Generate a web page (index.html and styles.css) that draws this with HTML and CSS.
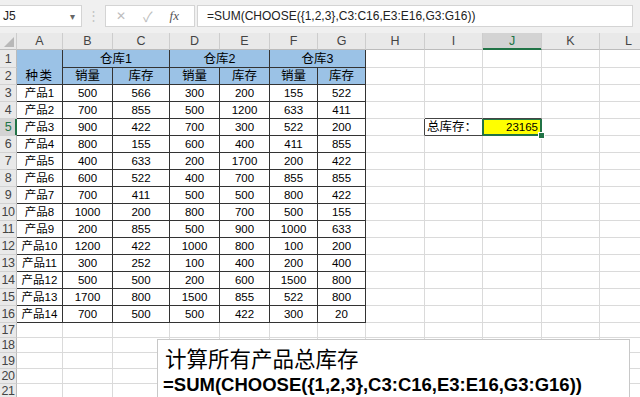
FILE: index.html
```html
<!DOCTYPE html>
<html lang="zh">
<head>
    <meta charset="UTF-8">
    <title>总库存</title>
    <link rel="stylesheet" href="styles.css">
</head>
<body>
<div class="toolbar">
    <div class="namebox"><span>J5</span><span class="arrow">&#9662;</span></div>
    <div class="sep">&#8942;</div>
    <div class="fxbox">
        <span class="cancel">&#10005;</span>
        <span class="enter">&#10003;</span>
        <span class="fx">fx</span>
    </div>
    <div class="formula">=SUM(CHOOSE({1,2,3},C3:C16,E3:E16,G3:G16))</div>
</div>

<div class="sheetwrap">
<table class="sheet">
    <colgroup>
        <col class="w-rh"><col class="w-a"><col class="w-b"><col class="w-c"><col class="w-d"><col class="w-e">
        <col class="w-f"><col class="w-g"><col class="w-h"><col class="w-i"><col class="w-j"><col class="w-k"><col class="w-l">
    </colgroup>
    <tr class="hdr">
        <td class="corner"><span class="tri"></span></td>
        <td class="ch">A</td><td class="ch">B</td><td class="ch">C</td><td class="ch">D</td><td class="ch">E</td>
        <td class="ch">F</td><td class="ch">G</td><td class="ch">H</td><td class="ch">I</td><td class="ch sel">J</td>
        <td class="ch">K</td><td class="ch">L</td>
    </tr>
    <tr class="r1">
        <td class="rh">1</td>
        <td class="d blue kind" rowspan="2">种类</td>
        <td class="d blue" colspan="2">仓库1</td>
        <td class="d blue" colspan="2">仓库2</td>
        <td class="d blue" colspan="2">仓库3</td>
        <td></td><td></td><td></td><td></td><td></td>
    </tr>
    <tr>
        <td class="rh">2</td>
        <td class="d blue">销量</td><td class="d blue">库存</td>
        <td class="d blue">销量</td><td class="d blue">库存</td>
        <td class="d blue">销量</td><td class="d blue">库存</td>
        <td></td><td></td><td></td><td></td><td></td>
    </tr>
    <tr><td class="rh">3</td><td class="d">产品1</td><td class="d">500</td><td class="d">566</td><td class="d">300</td><td class="d">200</td><td class="d">155</td><td class="d">522</td><td></td><td></td><td></td><td></td><td></td></tr>
    <tr><td class="rh">4</td><td class="d">产品2</td><td class="d">700</td><td class="d">855</td><td class="d">500</td><td class="d">1200</td><td class="d">633</td><td class="d">411</td><td></td><td class="above"></td><td class="above"></td><td></td><td></td></tr>
    <tr><td class="rh rsel">5</td><td class="d">产品3</td><td class="d">900</td><td class="d">422</td><td class="d">700</td><td class="d">300</td><td class="d">522</td><td class="d">200</td><td class="beside"></td><td class="label">总库存：</td><td class="total">23165<span class="handle"></span></td><td></td><td></td></tr>
    <tr><td class="rh">6</td><td class="d">产品4</td><td class="d">800</td><td class="d">155</td><td class="d">600</td><td class="d">400</td><td class="d">411</td><td class="d">855</td><td></td><td></td><td></td><td></td><td></td></tr>
    <tr><td class="rh">7</td><td class="d">产品5</td><td class="d">400</td><td class="d">633</td><td class="d">200</td><td class="d">1700</td><td class="d">200</td><td class="d">422</td><td></td><td></td><td></td><td></td><td></td></tr>
    <tr><td class="rh">8</td><td class="d">产品6</td><td class="d">600</td><td class="d">522</td><td class="d">400</td><td class="d">700</td><td class="d">855</td><td class="d">855</td><td></td><td></td><td></td><td></td><td></td></tr>
    <tr><td class="rh">9</td><td class="d">产品7</td><td class="d">700</td><td class="d">411</td><td class="d">500</td><td class="d">500</td><td class="d">800</td><td class="d">422</td><td></td><td></td><td></td><td></td><td></td></tr>
    <tr><td class="rh">10</td><td class="d">产品8</td><td class="d">1000</td><td class="d">200</td><td class="d">800</td><td class="d">700</td><td class="d">500</td><td class="d">155</td><td></td><td></td><td></td><td></td><td></td></tr>
    <tr><td class="rh">11</td><td class="d">产品9</td><td class="d">200</td><td class="d">855</td><td class="d">500</td><td class="d">900</td><td class="d">1000</td><td class="d">633</td><td></td><td></td><td></td><td></td><td></td></tr>
    <tr><td class="rh">12</td><td class="d">产品10</td><td class="d">1200</td><td class="d">422</td><td class="d">1000</td><td class="d">800</td><td class="d">100</td><td class="d">200</td><td></td><td></td><td></td><td></td><td></td></tr>
    <tr><td class="rh">13</td><td class="d">产品11</td><td class="d">300</td><td class="d">252</td><td class="d">100</td><td class="d">400</td><td class="d">200</td><td class="d">400</td><td></td><td></td><td></td><td></td><td></td></tr>
    <tr><td class="rh">14</td><td class="d">产品12</td><td class="d">500</td><td class="d">500</td><td class="d">200</td><td class="d">600</td><td class="d">1500</td><td class="d">800</td><td></td><td></td><td></td><td></td><td></td></tr>
    <tr><td class="rh">15</td><td class="d">产品13</td><td class="d">1700</td><td class="d">800</td><td class="d">1500</td><td class="d">855</td><td class="d">522</td><td class="d">800</td><td></td><td></td><td></td><td></td><td></td></tr>
    <tr><td class="rh">16</td><td class="d">产品14</td><td class="d">700</td><td class="d">500</td><td class="d">500</td><td class="d">422</td><td class="d">300</td><td class="d">20</td><td></td><td></td><td></td><td></td><td></td></tr>
    <tr class="low"><td class="rh">17</td><td></td><td></td><td></td><td></td><td></td><td></td><td></td><td></td><td></td><td></td><td></td><td></td></tr>
    <tr class="low"><td class="rh">18</td><td></td><td></td><td></td><td></td><td></td><td></td><td></td><td></td><td></td><td></td><td></td><td></td></tr>
    <tr class="low tall"><td class="rh">19</td><td></td><td></td><td></td><td></td><td></td><td></td><td></td><td></td><td></td><td></td><td></td><td></td></tr>
    <tr class="low"><td class="rh">20</td><td></td><td></td><td></td><td></td><td></td><td></td><td></td><td></td><td></td><td></td><td></td><td></td></tr>
    <tr class="low"><td class="rh">21</td><td></td><td></td><td></td><td></td><td></td><td></td><td></td><td></td><td></td><td></td><td></td><td></td></tr>
</table>

<div class="note">
    <div class="note-title">计算所有产品总库存</div>
    <div class="note-formula">=SUM(CHOOSE({1,2,3},C3:C16,E3:E16,G3:G16))</div>
</div>
</div>
</body>
</html>
```

FILE: styles.css
```css
body {
    margin: 0;
    width: 640px;
    height: 397px;
    overflow: hidden;
    background: #fff;
    font-family: "Liberation Sans", "Noto Sans CJK SC", sans-serif;
    color: #000;
}

/* formula bar */
.toolbar {
    display: flex;
    align-items: flex-start;
    height: 33px;
    padding-top: 5px;
    box-sizing: border-box;
    background: #f0f0f0;
}
.namebox {
    width: 82px;
    height: 22px;
    box-sizing: border-box;
    background: #fff;
    border: 1px solid #d4d4d4;
    border-left: none;
    display: flex;
    align-items: center;
    justify-content: space-between;
    padding: 0 6px 0 3px;
    font-size: 12px;
    color: #222;
}
.arrow {
    font-size: 10px;
    color: #666;
}
.sep {
    width: 23px;
    height: 22px;
    line-height: 22px;
    text-align: center;
    color: #c4c4c4;
    font-size: 13px;
}
.fxbox {
    width: 90px;
    height: 22px;
    box-sizing: border-box;
    background: #fff;
    border: 1px solid #d4d4d4;
    margin-right: 2px;
    display: flex;
    align-items: center;
    font-size: 13px;
}
.cancel {
    color: #bdbdbd;
    margin-left: 10px;
    font-size: 12px;
}
.enter {
    color: #bdbdbd;
    margin-left: 17px;
    font-size: 14px;
}
.fx {
    color: #555;
    margin-left: 17px;
    font-family: "Liberation Serif", serif;
    font-style: italic;
    font-size: 13px;
}
.formula {
    flex: 1;
    height: 22px;
    box-sizing: border-box;
    margin-right: 7px;
    padding-left: 9px;
    background: #fff;
    border: 1px solid #d4d4d4;
    line-height: 20px;
    font-size: 12px;
    color: #222;
}

/* sheet */
.sheetwrap {
    position: relative;
    width: 640px;
    overflow: hidden;
}
.sheet {
    table-layout: fixed;
    border-collapse: separate;
    border-spacing: 0;
    width: 658px;
    font-size: 12px;
}
.w-rh { width: 17px; }
.w-a { width: 46px; }
.w-b { width: 50px; }
.w-c { width: 57px; }
.w-d { width: 50px; }
.w-e { width: 50px; }
.w-f { width: 48px; }
.w-g { width: 48px; }
.w-h { width: 59px; }
.w-i { width: 58px; }
.w-j { width: 59px; }
.w-k { width: 58px; }
.w-l { width: 58px; }

.sheet tr { height: 17px; }
.sheet tr.r1 { height: 18px; }
.sheet tr.low { height: 15px; }
.sheet tr.tall { height: 16px; }

.sheet td {
    padding: 0;
    border-right: 1px solid #dadada;
    border-bottom: 1px solid #dadada;
    line-height: 15px;
    vertical-align: bottom;
    text-align: center;
    white-space: nowrap;
    overflow: hidden;
}
.sheet tr.low td { line-height: 14px; }

.sheet .hdr td {
    background: #e9e9e9;
    border-right: 1px solid #cdcdcd;
    border-bottom: 1px solid #bcbcbc;
    color: #444;
    font-size: 12.5px;
    vertical-align: middle;
}
.sheet .hdr td.sel {
    background: #d3d3d3;
    border-bottom-color: #217346;
    box-shadow: inset 0 -1px 0 #217346;
    color: #217346;
}
.corner {
    position: relative;
}
.tri {
    position: absolute;
    right: 2px;
    bottom: 2px;
    width: 0;
    height: 0;
    border-left: 10px solid transparent;
    border-bottom: 10px solid #b8b8b8;
}
.sheet td.rh {
    background: #e9e9e9;
    border-right: 1px solid #bcbcbc;
    border-bottom: 1px solid #d2d2d2;
    color: #444;
    font-size: 12.5px;
    letter-spacing: -0.5px;
}
.sheet td.rsel {
    background: #d3d3d3;
    border-right-color: #217346;
    box-shadow: inset -1px 0 0 #217346;
    color: #217346;
}

.sheet td.d {
    border-right: 1px solid #333;
    border-bottom: 1px solid #333;
    font-size: 11.5px;
}
.sheet td.blue {
    background: #9bc2e6;
    font-size: 12.5px;
}
.kind {
    letter-spacing: 1.5px;
}

/* I5 label box and J5 selection */
.sheet td.above {
    border-bottom-color: #444;
}
.sheet td.beside {
    border-right-color: #444;
}
.sheet td.label {
    border-bottom-color: #444;
    border-right-color: #217346;
    text-align: left;
    font-size: 12.5px;
    padding-left: 2px;
}
.sheet td.total {
    position: relative;
    overflow: visible;
    background: #ffff00;
    border-right-color: #217346;
    border-bottom-color: #217346;
    box-shadow: inset 1px 1px 0 #217346, inset -1px -1px 0 #217346;
    text-align: right;
    padding-right: 3px;
    font-size: 11.5px;
}
.handle {
    position: absolute;
    right: -4px;
    bottom: -4px;
    width: 5px;
    height: 5px;
    background: #217346;
    border: 1px solid #fff;
}

/* text box over the grid */
.note {
    position: absolute;
    left: 157px;
    top: 306px;
    width: 473px;
    height: 80px;
    box-sizing: border-box;
    background: #fff;
    border: 1px solid #c8c8c8;
    padding: 5px 0 0 7px;
}
.note-title {
    font-family: "Noto Sans CJK SC", sans-serif;
    font-size: 21.5px;
    line-height: 26px;
}
.note-formula {
    margin-top: 3px;
    margin-left: -2px;
    font-weight: bold;
    font-size: 18.5px;
    line-height: 22px;
}
```
